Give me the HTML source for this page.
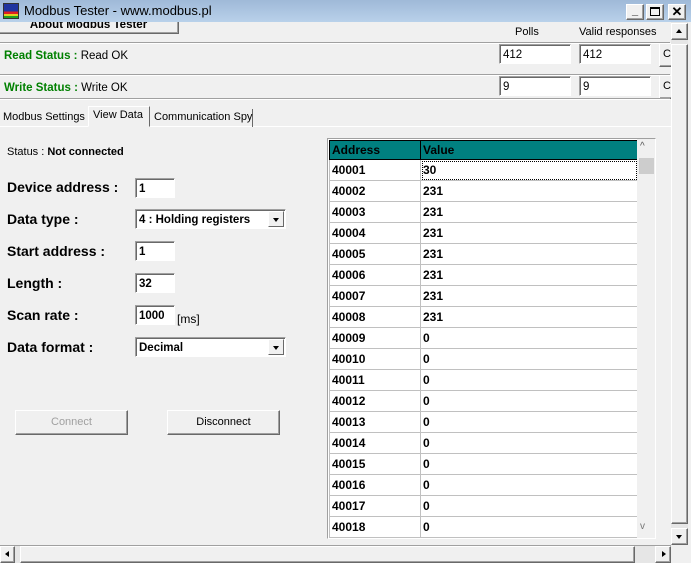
<!DOCTYPE html>
<html><head><meta charset="utf-8"><style>
*{box-sizing:border-box;margin:0;padding:0}
body{width:691px;height:563px;background:#f0f0f0;font-family:"Liberation Sans",Arial,sans-serif;font-size:11px;position:relative;overflow:hidden;color:#000}
.a{position:absolute;white-space:nowrap}
.inp{position:absolute;background:#fff;border:1px solid;border-color:#a0a0a0 #fff #fff #a0a0a0;box-shadow:inset 1px 1px 0 #696969;padding:3px 3px 0;line-height:14px;font-size:11.5px;white-space:nowrap}
.lbl{position:absolute;left:7px;font-weight:bold;font-size:14px;white-space:nowrap}
.btn{position:absolute;border:1px solid;border-color:#fff #696969 #696969 #fff;box-shadow:inset -1px -1px 0 #a0a0a0;background:#f0f0f0;text-align:center;font-size:11px;white-space:nowrap}
.sep{position:absolute;left:0;width:670px;height:2px;border-top:1px solid #a0a0a0;border-bottom:1px solid #fff}
.dd{position:absolute;right:1px;top:1px;width:16px;height:16px;background:#f0f0f0;border:1px solid;border-color:#fff #696969 #696969 #fff}
.dd:after{content:"";position:absolute;left:4px;top:6px;border:3px solid transparent;border-top:4px solid #000}
table{border-collapse:collapse}
td{height:21px;border:1px solid #c0c0c0;font-weight:bold;font-size:12px;padding:0 2px;background:#fff;line-height:20px}
th{height:19px;border:1px solid #000;background:#008080;font-weight:bold;font-size:12px;padding:0 2px;text-align:left;line-height:17px}
</style></head><body>
<div class="btn" style="left:-2px;top:10px;width:181px;height:24px;font-weight:bold;font-size:11.5px;line-height:28px;overflow:hidden">About Modbus Tester</div>
<div class="a" style="left:0;top:0;width:691px;height:22px;background:linear-gradient(#9fb9d8,#b9d1ea);z-index:2">
<div class="a" style="left:3px;top:3px;width:16px;height:16px;background:linear-gradient(#2035a0 0 55%,#e02020 55% 70%,#e0d020 70% 85%,#20a020 85%);border:1px solid #333"></div>
<div class="a" style="left:24px;top:3px;font-size:13px">Modbus Tester - www.modbus.pl</div>
<div class="btn" style="left:626px;top:4px;width:18px;height:16px;font-weight:bold;line-height:12px">_</div>
<div class="btn" style="left:646px;top:4px;width:18px;height:16px"><div class="a" style="left:3px;top:2px;width:10px;height:9px;border:1px solid #000;border-top-width:2px"></div></div>
<div class="btn" style="left:668px;top:4px;width:18px;height:16px;font-weight:bold;font-size:13px;line-height:14px">✕</div>
</div>

<div class="a" style="left:515px;top:26px">Polls</div>
<div class="a" style="left:579px;top:26px">Valid responses</div>
<div class="sep" style="top:42px"></div>
<div class="a" style="left:4px;top:50px;font-size:11.5px"><b style="color:#008000">Read Status :</b> Read OK</div>
<div class="inp" style="left:499px;top:44px;width:72px;height:20px">412</div>
<div class="inp" style="left:579px;top:44px;width:72px;height:20px">412</div>
<div class="btn" style="left:659px;top:43px;width:20px;height:24px;text-align:left;padding:4px 3px">Cl</div>
<div class="sep" style="top:74px"></div>
<div class="a" style="left:4px;top:82px;font-size:11.5px"><b style="color:#008000">Write Status :</b> Write OK</div>
<div class="inp" style="left:499px;top:76px;width:72px;height:20px">9</div>
<div class="inp" style="left:579px;top:76px;width:72px;height:20px">9</div>
<div class="btn" style="left:659px;top:75px;width:20px;height:24px;text-align:left;padding:4px 3px">C</div>
<div class="sep" style="top:98px"></div>

<div class="a" style="left:0;top:126px;width:671px;height:1px;background:#fff"></div>
<div class="a" style="left:0;top:109px;width:88px;height:18px;padding:2px 3px">Modbus Settings</div>
<div class="a" style="left:88px;top:106px;width:62px;height:21px;border:1px solid;border-color:#fff #696969 transparent #fff;background:#f0f0f0;padding:2px 4px">View Data</div>
<div class="a" style="left:151px;top:109px;width:102px;height:18px;border-right:1px solid #696969;padding:2px 3px">Communication Spy</div>

<div class="a" style="left:7px;top:146px;font-size:11px">Status : <b>Not connected</b></div>
<div class="lbl" style="top:179px">Device address :</div>
<div class="inp" style="left:135px;top:178px;width:40px;height:20px;font-weight:bold">1</div>
<div class="lbl" style="top:211px">Data type :</div>
<div class="inp" style="left:135px;top:209px;width:151px;height:20px;font-weight:bold">4 : Holding registers<div class="dd"></div></div>
<div class="lbl" style="top:243px">Start address :</div>
<div class="inp" style="left:135px;top:241px;width:40px;height:20px;font-weight:bold">1</div>
<div class="lbl" style="top:275px">Length :</div>
<div class="inp" style="left:135px;top:273px;width:40px;height:20px;font-weight:bold">32</div>
<div class="lbl" style="top:307px">Scan rate :</div>
<div class="inp" style="left:135px;top:305px;width:40px;height:20px;font-weight:bold">1000</div>
<div class="a" style="left:177px;top:312px;font-size:12px">[ms]</div>
<div class="lbl" style="top:339px">Data format :</div>
<div class="inp" style="left:135px;top:337px;width:151px;height:20px;font-weight:bold">Decimal<div class="dd"></div></div>

<div class="btn" style="left:15px;top:410px;width:113px;height:25px;line-height:22px;color:#a0a0a0">Connect</div>
<div class="btn" style="left:167px;top:410px;width:113px;height:25px;line-height:22px">Disconnect</div>

<div class="a" style="left:327px;top:138px;width:329px;height:401px;border:1px solid;border-color:#a0a0a0 #fff #fff #a0a0a0;background:#fff;overflow:hidden">
<table class="a" style="left:1px;top:1px;width:309px">
<tr><th style="width:91px">Address</th><th>Value</th></tr>
<tr><td>40001</td><td style="outline:1px dotted #000;outline-offset:-2px">30</td></tr>
<tr><td>40002</td><td>231</td></tr><tr><td>40003</td><td>231</td></tr><tr><td>40004</td><td>231</td></tr>
<tr><td>40005</td><td>231</td></tr><tr><td>40006</td><td>231</td></tr><tr><td>40007</td><td>231</td></tr>
<tr><td>40008</td><td>231</td></tr><tr><td>40009</td><td>0</td></tr><tr><td>40010</td><td>0</td></tr>
<tr><td>40011</td><td>0</td></tr><tr><td>40012</td><td>0</td></tr><tr><td>40013</td><td>0</td></tr>
<tr><td>40014</td><td>0</td></tr><tr><td>40015</td><td>0</td></tr><tr><td>40016</td><td>0</td></tr>
<tr><td>40017</td><td>0</td></tr><tr><td>40018</td><td>0</td></tr>
</table>
<div class="a" style="left:309px;top:0;width:18px;height:400px;background:#f0f0f0"></div>
<div class="a" style="left:312px;top:2px;font-size:10px;color:#555">^</div>
<div class="a" style="left:311px;top:19px;width:15px;height:16px;background:#cdcdcd"></div>
<div class="a" style="left:312px;top:382px;font-size:10px;color:#777">v</div>
</div>

<div class="a" style="left:671px;top:22px;width:17px;height:523px;background:#e6e6e6"></div>
<div class="btn" style="left:671px;top:23px;width:17px;height:17px"><div class="a" style="left:4px;top:5px;border:3px solid transparent;border-bottom:4px solid #000;border-top:0"></div></div>
<div class="btn" style="left:671px;top:44px;width:17px;height:480px"></div>
<div class="btn" style="left:671px;top:528px;width:17px;height:17px"><div class="a" style="left:4px;top:6px;border:3px solid transparent;border-top:4px solid #000;border-bottom:0"></div></div>

<div class="a" style="left:0;top:545px;width:671px;height:18px;background:#e6e6e6;border-top:1px solid #a0a0a0"></div>
<div class="btn" style="left:0;top:546px;width:15px;height:17px"><div class="a" style="left:4px;top:4px;border:3px solid transparent;border-right:4px solid #000;border-left:0"></div></div>
<div class="btn" style="left:20px;top:546px;width:615px;height:17px"></div>
<div class="btn" style="left:655px;top:546px;width:16px;height:17px"><div class="a" style="left:6px;top:4px;border:3px solid transparent;border-left:4px solid #000;border-right:0"></div></div>
</body></html>
